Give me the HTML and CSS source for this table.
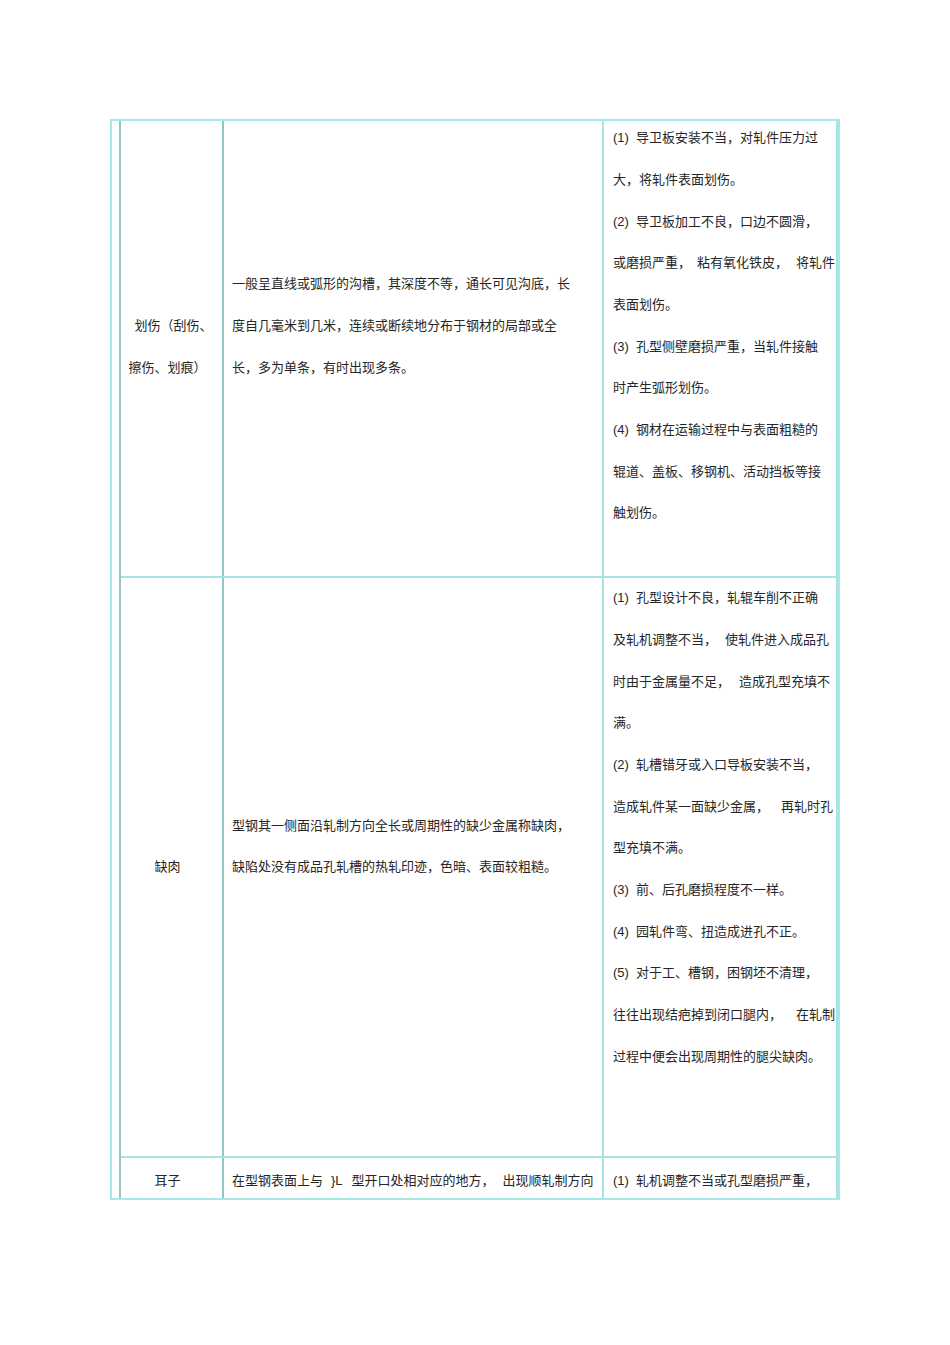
FILE: index.html
```html
<!DOCTYPE html>
<html lang="zh-CN">
<head>
<meta charset="utf-8">
<title>型钢表面缺陷</title>
<link rel="stylesheet" href="styles.css">
</head>
<body>
<div class="page">
  <div class="frame">
    <div class="strip"></div>
    <div class="table">
      <div class="row r1">
        <div class="cell c1">
          <div class="ln"><span class="shift">划伤（刮伤、</span></div>
          <div class="ln">擦伤、划痕）</div>
        </div>
        <div class="cell c2">
          <div class="ln">一般呈直线或弧形的沟槽，其深度不等，通长可见沟底，长</div>
          <div class="ln">度自几毫米到几米，连续或断续地分布于钢材的局部或全</div>
          <div class="ln">长，多为单条，有时出现多条。</div>
          <div class="ln">&nbsp;</div>
        </div>
        <div class="cell c3">
          <div class="ln"><span class="n">(1)</span>导卫板安装不当，对轧件压力过</div>
          <div class="ln">大，将轧件表面划伤。</div>
          <div class="ln"><span class="n">(2)</span>导卫板加工不良，口边不圆滑，</div>
          <div class="ln">或磨损严重，<span class="g6">粘有氧化铁皮，</span><span class="g8">将轧件</span></div>
          <div class="ln">表面划伤。</div>
          <div class="ln"><span class="n">(3)</span>孔型侧壁磨损严重，当轧件接触</div>
          <div class="ln">时产生弧形划伤。</div>
          <div class="ln"><span class="n">(4)</span>钢材在运输过程中与表面粗糙的</div>
          <div class="ln">辊道、盖板、移钢机、活动挡板等接</div>
          <div class="ln">触划伤。</div>
          <div class="ln">&nbsp;</div>
        </div>
      </div>
      <div class="row r2">
        <div class="cell c1">
          <div class="ln">缺肉</div>
        </div>
        <div class="cell c2">
          <div class="ln">型钢其一侧面沿轧制方向全长或周期性的缺少金属称缺肉，</div>
          <div class="ln">缺陷处没有成品孔轧槽的热轧印迹，色暗、表面较粗糙。</div>
          <div class="ln">&nbsp;</div>
        </div>
        <div class="cell c3">
          <div class="ln"><span class="n">(1)</span>孔型设计不良，轧辊车削不正确</div>
          <div class="ln">及轧机调整不当，<span class="g8">使轧件进入成品孔</span></div>
          <div class="ln">时由于金属量不足，<span class="g9">造成孔型充填不</span></div>
          <div class="ln">满。</div>
          <div class="ln"><span class="n">(2)</span>轧槽错牙或入口导板安装不当，</div>
          <div class="ln">造成轧件某一面缺少金属，<span class="g12">再轧时孔</span></div>
          <div class="ln">型充填不满。</div>
          <div class="ln"><span class="n">(3)</span>前、后孔磨损程度不一样。</div>
          <div class="ln"><span class="n">(4)</span>园轧件弯、扭造成进孔不正。</div>
          <div class="ln"><span class="n">(5)</span>对于工、槽钢，困钢坯不清理，</div>
          <div class="ln">往往出现结疤掉到闭口腿内，<span class="g14">在轧制</span></div>
          <div class="ln">过程中便会出现周期性的腿尖缺肉。</div>
          <div class="ln">&nbsp;</div>
          <div class="ln">&nbsp;</div>
        </div>
      </div>
      <div class="row r3">
        <div class="cell c1">
          <div class="ln">耳子</div>
        </div>
        <div class="cell c2">
          <div class="ln">在型钢表面上与<span class="g8">}L</span><span class="g9">型开口处相对应的地方，</span><span class="g8">出现顺轧制方向</span></div>
        </div>
        <div class="cell c3">
          <div class="ln"><span class="n">(1)</span>轧机调整不当或孔型磨损严重，</div>
        </div>
      </div>
    </div>
  </div>
</div>
</body>
</html>
```

FILE: styles.css
```css
* {
  box-sizing: border-box;
}

html, body {
  margin: 0;
  padding: 0;
  background: #ffffff;
}

body {
  font-family: "Liberation Sans", "Noto Sans CJK SC", sans-serif;
  font-size: 13px;
  color: #262626;
}

.page {
  padding: 119px 0 0 110px;
}

.frame {
  width: 730px;
  border: 2px solid #a6e8e8;
  display: flex;
}

.strip {
  width: 7px;
  flex: none;
}

.table {
  flex: 1;
  border-left: 2px solid #93c7c7;
}

.row {
  display: grid;
  grid-template-columns: 103px 380px 1fr;
  grid-template-rows: minmax(0, 1fr);
  border-bottom: 2px solid #a6e4e4;
}

.r1 {
  height: 457px;
}

.r2 {
  height: 580px;
}

.r3 {
  height: 40px;
  border-bottom: none;
}

.cell {
  display: flex;
  flex-direction: column;
  justify-content: center;
  min-height: 0;
  line-height: 41.67px;
  white-space: nowrap;
}

.r1 .cell {
  padding-bottom: 4px;
}

.r2 .c3 {
  padding-top: 4px;
}

.r3 .cell {
  padding-top: 6px;
}

.c1 {
  border-right: 2px solid #93c7c7;
  text-align: center;
  padding-right: 8px;
}

.c2 {
  border-right: 2px solid #a6e4e4;
  padding-left: 8px;
  padding-right: 8px;
}

.c3 {
  border-right: 2px solid #a6e4e4;
  padding-left: 9px;
  padding-right: 1px;
}

.ln {
  height: 41.67px;
  flex: none;
}

.r3 .ln {
  height: 34px;
  line-height: 34px;
}

.shift {
  padding-left: 12px;
}

.n {
  display: inline-block;
  width: 23px;
}

.g6 { margin-left: 6px; }
.g8 { margin-left: 8px; }
.g9 { margin-left: 9px; }
.g12 { margin-left: 12px; }
.g14 { margin-left: 14px; }
```
